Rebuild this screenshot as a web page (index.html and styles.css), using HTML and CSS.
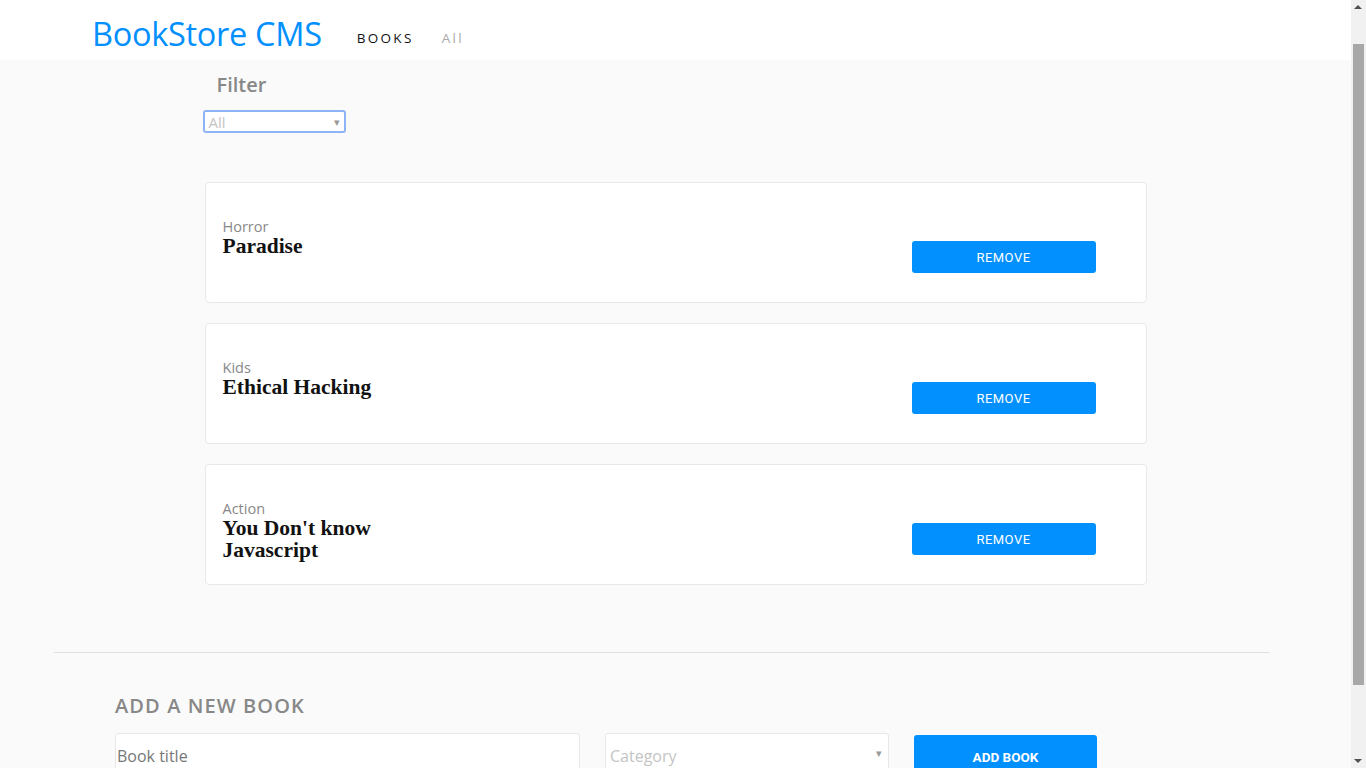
FILE: index.html
```html
<!DOCTYPE html>
<html lang="en">
<head>
<meta charset="utf-8">
<title>BookStore CMS</title>
<link rel="stylesheet" href="styles.css">
</head>
<body>
<header class="header">
  <h1 class="logo">BookStore CMS</h1>
  <nav class="nav">
    <a class="nav-link active" href="#">BOOKS</a>
    <a class="nav-link" href="#">All</a>
  </nav>
</header>
<main class="main">
  <section class="filter">
    <h2 class="filter-title">Filter</h2>
    <div class="filter-select">
      <span class="placeholder">All</span>
      <span class="arrow">▾</span>
    </div>
  </section>
  <ul class="book-list">
    <li class="book">
      <div class="book-info">
        <span class="book-cat">Horror</span>
        <span class="book-title">Paradise</span>
      </div>
      <button class="btn-remove">REMOVE</button>
    </li>
    <li class="book">
      <div class="book-info">
        <span class="book-cat">Kids</span>
        <span class="book-title">Ethical Hacking</span>
      </div>
      <button class="btn-remove">REMOVE</button>
    </li>
    <li class="book">
      <div class="book-info">
        <span class="book-cat">Action</span>
        <span class="book-title">You Don't know Javascript</span>
      </div>
      <button class="btn-remove">REMOVE</button>
    </li>
  </ul>
</main>
<hr class="divider">
<section class="add-book">
  <h2 class="add-title">ADD A NEW BOOK</h2>
  <form class="add-form">
    <div class="input-title">Book title</div>
    <div class="input-cat"><span>Category</span><span class="arrow">▾</span></div>
    <button type="button" class="btn-add">ADD BOOK</button>
  </form>
</section>
<div class="scrollbar" aria-hidden="true">
  <span class="sb-up"></span>
  <span class="sb-thumb"></span>
  <span class="sb-down"></span>
</div>
</body>
</html>
```
FILE: styles.css
```css
* { box-sizing: border-box; }
html, body { margin: 0; padding: 0; }
body {
  background: #fafafa;
  font-family: "Open Sans", sans-serif;
  min-height: 1150px;
  margin-right: 15px;
}
.scrollbar {
  position: fixed;
  top: 0;
  right: 0;
  width: 15px;
  height: 768px;
  background: #f1f1f1;
}
.sb-up, .sb-down {
  position: absolute;
  left: 3px;
  width: 0;
  height: 0;
  border-left: 4px solid transparent;
  border-right: 4px solid transparent;
}
.sb-up { top: 5px; border-bottom: 4px solid #505050; }
.sb-down { bottom: 5px; border-top: 4px solid #505050; }
.sb-thumb {
  position: absolute;
  left: 2px;
  top: 44px;
  width: 11px;
  height: 641px;
  background: #a8a8a8;
}
.header {
  height: 60px;
  background: #fff;
  display: flex;
  align-items: flex-end;
  padding: 0 0 7px 92px;
}
.logo {
  margin: 0;
  font-family: "Open Sans", sans-serif;
  font-weight: 400;
  font-size: 32.5px;
  line-height: 38px;
  color: #0290ff;
  letter-spacing: -0.3px;
}
.nav {
  display: flex;
  gap: 28px;
  margin-left: 35px;
  padding-bottom: 6px;
}
.nav-link {
  font-size: 13.5px;
  letter-spacing: 2.3px;
  color: #aaa;
  text-decoration: none;
}
.nav-link.active { color: #121212; }
.main {
  width: 942px;
  margin: 0 auto;
  padding-top: 10px;
}
.filter-title {
  margin: 0 0 10px 12px;
  font-size: 20px;
  line-height: 30px;
  font-weight: 600;
  color: #888;
}
.filter-select {
  margin-left: -2px;
  width: 143px;
  height: 23px;
  background: #fff;
  border: 2px solid #8fb4f6;
  border-radius: 3px;
  display: flex;
  align-items: center;
  justify-content: space-between;
  padding: 0 4px 0 4px;
  font-size: 15px;
  color: #c4c4c4;
}
.arrow { font-size: 11px; color: #999; }
.book-list {
  list-style: none;
  margin: 49px 0 0;
  padding: 0;
  display: flex;
  flex-direction: column;
  gap: 20px;
}
.book {
  height: 121px;
  background: #fff;
  border: 1px solid #e8e8e8;
  border-radius: 4px;
  display: flex;
  justify-content: space-between;
  align-items: flex-start;
  padding: 0 50px 0 17px;
}
.book-info {
  width: 180px;
  padding-top: 35px;
  display: flex;
  flex-direction: column;
}
.book-cat {
  font-size: 14.5px;
  line-height: 17px;
  color: #888;
}
.book-title {
  font-family: "Liberation Serif", serif;
  font-weight: 700;
  font-size: 21.5px;
  line-height: 22px;
  color: #121212;
}
.btn-remove {
  margin-top: 58px;
  width: 184px;
  height: 32px;
  border: none;
  border-radius: 3px;
  background: #0290ff;
  color: #fff;
  font-family: Roboto, sans-serif;
  font-size: 13px;
  letter-spacing: 0.5px;
}
.divider {
  margin: 67px 0 0 54px;
  width: 1216px;
  border: none;
  border-top: 1px solid #e0e0e0;
}
.add-book {
  padding: 39px 0 0 115px;
}
.add-title {
  margin: 0 0 13px;
  font-size: 20px;
  line-height: 28px;
  font-weight: 600;
  color: #888;
  letter-spacing: 1.1px;
}
.add-form {
  display: flex;
  gap: 25px;
  align-items: flex-start;
}
.input-title {
  width: 465px;
  height: 46px;
  background: #fff;
  border: 1px solid #e8e8e8;
  border-radius: 3px;
  padding: 11px 1px;
  font-size: 16px;
  color: #777;
}
.input-cat {
  width: 284px;
  height: 46px;
  background: #fff;
  border: 1px solid #e8e8e8;
  border-radius: 3px;
  padding: 11px 6px 0 4px;
  font-size: 16px;
  color: #c4c4c4;
  display: flex;
  justify-content: space-between;
}
.btn-add {
  margin-top: 2px;
  width: 183px;
  height: 44px;
  border: none;
  border-radius: 3px;
  background: #0290ff;
  color: #fff;
  font-family: Roboto, sans-serif;
  font-weight: 700;
  font-size: 13.5px;
  padding: 0;
}
```
